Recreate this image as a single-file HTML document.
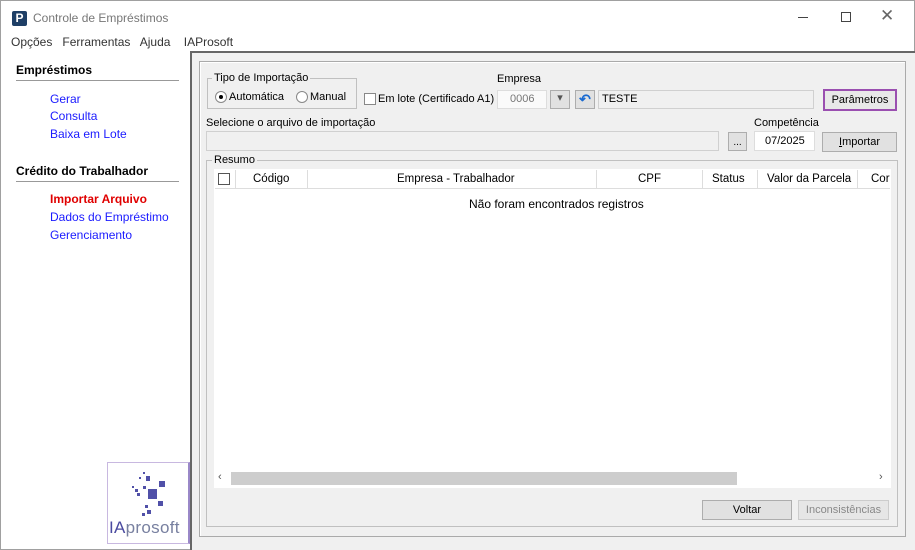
<!DOCTYPE html>
<html><head><meta charset="utf-8"><style>
*{box-sizing:border-box;margin:0;padding:0}
html,body{width:915px;height:550px;overflow:hidden}
body{background:#fff;font-family:"Liberation Sans",sans-serif;font-size:12px;color:#000;position:relative}
.a{position:absolute}
.lnk{color:#1a1aff;font-size:12px}
.btn{position:absolute;background:#e1e1e1;border:1px solid #adadad;text-align:center;font-size:11px;line-height:18px}
.fld{position:absolute;background:#f0f0f0;border:1px solid #d0d0d0}
</style></head><body>
<div class="a" style="left:0;top:0;width:915px;height:550px;border:1px solid #a0a0a0"></div>
<div class="a" style="left:12px;top:11px;width:15px;height:15px;background:#1e3f66;border-radius:2px;color:#fff;font-weight:bold;font-size:12px;line-height:15px;text-align:center">P</div>
<div class="a" style="left:33px;top:11px;color:#777;font-size:12px">Controle de Empréstimos</div>
<div class="a" style="left:798px;top:17px;width:10px;height:1px;background:#444"></div>
<div class="a" style="left:841px;top:12px;width:10px;height:10px;border:1px solid #444"></div>
<div class="a" style="left:880px;top:6px;font-size:17px;line-height:20px;color:#666">✕</div>
<div class="a" style="left:11px;top:35px;color:#333">Opções&nbsp;&nbsp; Ferramentas&nbsp;&nbsp; Ajuda&nbsp;&nbsp;&nbsp; IAProsoft</div>
<div class="a" style="left:16px;top:63px;font-weight:bold">Empréstimos</div>
<div class="a" style="left:16px;top:80px;width:163px;height:1px;background:#999"></div>
<div class="a lnk" style="left:50px;top:92px">Gerar</div>
<div class="a lnk" style="left:50px;top:109px">Consulta</div>
<div class="a lnk" style="left:50px;top:127px">Baixa em Lote</div>
<div class="a" style="left:16px;top:164px;font-weight:bold">Crédito do Trabalhador</div>
<div class="a" style="left:16px;top:181px;width:163px;height:1px;background:#999"></div>
<div class="a" style="left:50px;top:192px;color:#e00000;font-weight:bold">Importar Arquivo</div>
<div class="a lnk" style="left:50px;top:210px">Dados do Empréstimo</div>
<div class="a lnk" style="left:50px;top:228px">Gerenciamento</div>
<div class="a" style="left:107px;top:462px;width:83px;height:82px;border:1px solid #c8b8e0;border-right:2px solid #9a88c8;background:#fff"></div>
<svg class="a" style="left:0;top:0" width="200" height="540">
<g fill="#5050a8"><rect x="139" y="477" width="2" height="2"/><rect x="143" y="472" width="2" height="2"/><rect x="146" y="476" width="4" height="5"/><rect x="159" y="481" width="6" height="6"/><rect x="143" y="486" width="3" height="3"/><rect x="132" y="486" width="2" height="2"/><rect x="135" y="489" width="3" height="3"/><rect x="137" y="493" width="3" height="3"/><rect x="148" y="489" width="9" height="10"/><rect x="158" y="501" width="5" height="5"/><rect x="145" y="505" width="3" height="3"/><rect x="147" y="510" width="4" height="4"/><rect x="142" y="513" width="3" height="3"/></g></svg>
<div class="a" style="left:109px;top:518px;color:#4a4aa0;font-size:17px;line-height:20px;letter-spacing:0.3px">IA<span style="color:#7880a0">prosoft</span></div>
<div class="a" style="left:190px;top:51px;width:725px;height:499px;background:#f0f0f0;border-top:2px solid #666;border-left:2px solid #666"></div>
<div class="a" style="left:199px;top:61px;width:707px;height:476px;border:1px solid #aaa;box-shadow:1px 1px 0 #fff inset"></div>
<div class="a" style="left:207px;top:78px;width:150px;height:31px;border:1px solid #c0c0c0"></div>
<div class="a" style="left:212px;top:72px;background:#f0f0f0;padding:0 2px;font-size:11px">Tipo de Importação</div>
<div class="a" style="left:215px;top:91px;width:12px;height:12px;border:1px solid #888;border-radius:50%;background:#fff"></div>
<div class="a" style="left:219px;top:95px;width:4px;height:4px;border-radius:50%;background:#000"></div>
<div class="a" style="left:229px;top:91px;font-size:11px">Automática</div>
<div class="a" style="left:296px;top:91px;width:12px;height:12px;border:1px solid #888;border-radius:50%;background:#fff"></div>
<div class="a" style="left:310px;top:91px;font-size:11px">Manual</div>
<div class="a" style="left:364px;top:93px;width:12px;height:12px;border:1px solid #888;background:#fff"></div>
<div class="a" style="left:378px;top:93px;font-size:11px">Em lote (Certificado A1)</div>
<div class="a" style="left:497px;top:73px;font-size:11px">Empresa</div>
<div class="a" style="left:497px;top:90px;width:50px;height:19px;background:#fafafa;border:1px solid #ddd;color:#777;font-size:11px;line-height:17px;padding-left:12px">0006</div>
<div class="btn" style="left:550px;top:90px;width:20px;height:19px;line-height:15px;color:#555">▾</div>
<div class="btn" style="left:575px;top:90px;width:20px;height:19px;color:#1a6ad0;font-weight:bold;font-size:14px;line-height:16px">↶</div>
<div class="fld" style="left:598px;top:90px;width:216px;height:19px;font-size:11px;line-height:17px;padding-left:3px">TESTE</div>
<div class="btn" style="left:823px;top:89px;width:74px;height:22px;border:2px solid #9a4fb0;background:#e8e8e8;line-height:18px">Parâmetros</div>
<div class="a" style="left:206px;top:117px;font-size:11px">Selecione o arquivo de importação</div>
<div class="fld" style="left:206px;top:131px;width:513px;height:20px"></div>
<div class="btn" style="left:728px;top:132px;width:19px;height:19px;font-size:10px;line-height:20px">...</div>
<div class="a" style="left:754px;top:117px;font-size:11px">Competência</div>
<div class="a" style="left:754px;top:131px;width:61px;height:20px;background:#fff;border:1px solid #ddd;font-size:11px;line-height:18px;padding-left:10px">07/2025</div>
<div class="btn" style="left:822px;top:132px;width:75px;height:20px;line-height:18px"><u>I</u>mportar</div>
<div class="a" style="left:206px;top:160px;width:692px;height:367px;border:1px solid #c0c0c0"></div>
<div class="a" style="left:212px;top:154px;background:#f0f0f0;padding:0 2px;font-size:11px">Resumo</div>
<div class="a" style="left:214px;top:169px;width:677px;height:319px;background:#fff"></div>
<div class="a" style="left:215px;top:170px;width:675px;height:19px;border-bottom:1px solid #ddd;font-size:11.5px">
<div class="a" style="left:3px;top:3px;width:12px;height:12px;border:1px solid #555"></div>
<div class="a" style="left:20px;top:0;height:19px;width:1px;background:#ddd"></div>
<div class="a" style="left:38px;top:3px">Código</div>
<div class="a" style="left:92px;top:0;height:19px;width:1px;background:#ddd"></div>
<div class="a" style="left:182px;top:3px">Empresa - Trabalhador</div>
<div class="a" style="left:381px;top:0;height:19px;width:1px;background:#ddd"></div>
<div class="a" style="left:423px;top:3px">CPF</div>
<div class="a" style="left:487px;top:0;height:19px;width:1px;background:#ddd"></div>
<div class="a" style="left:497px;top:3px">Status</div>
<div class="a" style="left:542px;top:0;height:19px;width:1px;background:#ddd"></div>
<div class="a" style="left:552px;top:3px">Valor da Parcela</div>
<div class="a" style="left:642px;top:0;height:19px;width:1px;background:#ddd"></div>
<div class="a" style="left:656px;top:3px">Cor</div>
</div>
<div class="a" style="left:469px;top:197px;font-size:12px">Não foram encontrados registros</div>
<div class="a" style="left:231px;top:472px;width:506px;height:13px;background:#cdcdcd"></div>
<div class="a" style="left:218px;top:471px;font-size:11px;color:#555">‹</div>
<div class="a" style="left:879px;top:471px;font-size:11px;color:#555">›</div>
<div class="btn" style="left:702px;top:500px;width:90px;height:20px;line-height:18px">Voltar</div>
<div class="btn" style="left:798px;top:500px;width:91px;height:20px;line-height:18px;color:#888;background:#e6e6e6;border-color:#ccc">Inconsistências</div>
</body></html>
